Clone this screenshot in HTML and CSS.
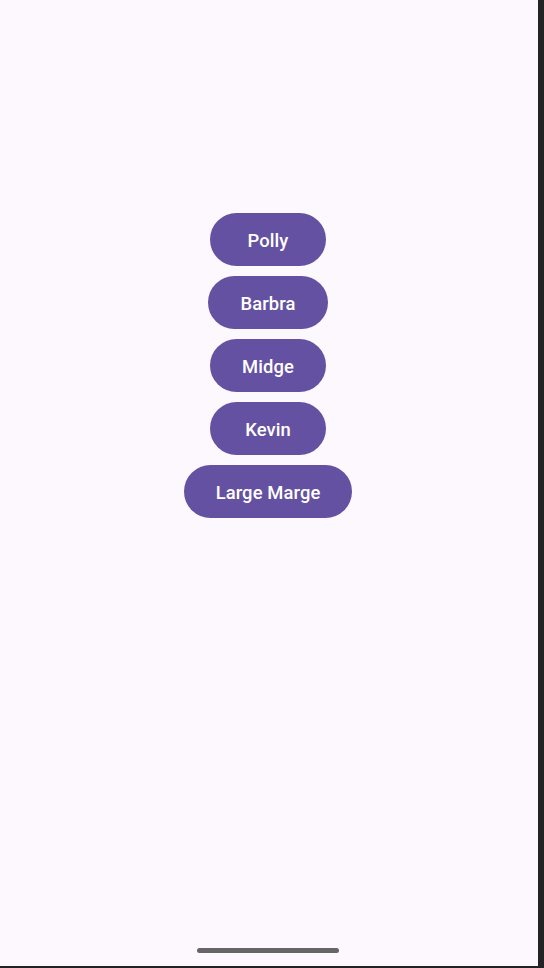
FILE: index.html
```html
<!DOCTYPE html>
<html lang="en">
<head>
<meta charset="utf-8">
<title>Buttons</title>
<link rel="stylesheet" href="styles.css">
</head>
<body>
<div class="screen">
  <div class="list">
    <button class="pill">Polly</button>
    <button class="pill">Barbra</button>
    <button class="pill">Midge</button>
    <button class="pill">Kevin</button>
    <button class="pill">Large Marge</button>
  </div>
  <div class="handle"></div>
</div>
</body>
</html>
```
FILE: styles.css
```css
html {
  background: #232323;
}
body {
  margin: 0;
  width: 544px;
  height: 968px;
  overflow: hidden;
}
.screen {
  width: 538px;
  height: 966px;
  background: #fdf8fd;
  display: flex;
  flex-direction: column;
  align-items: center;
}
.list {
  padding-top: 213px;
  padding-right: 2px;
  display: flex;
  flex-direction: column;
  align-items: center;
  gap: 10px;
}
.pill {
  box-sizing: border-box;
  height: 53px;
  min-width: 116px;
  padding: 3px 32px 0;
  border: none;
  border-radius: 27px;
  background: #6451a1;
  color: #ffffff;
  font-family: Roboto, "Noto Sans", sans-serif;
  font-weight: 500;
  font-size: 18.4px;
  letter-spacing: 0.1px;
  line-height: 1;
  cursor: pointer;
}
.handle {
  margin-top: auto;
  margin-bottom: 13px;
  margin-right: 2px;
  width: 142px;
  height: 5px;
  border-radius: 3px;
  background: #666666;
}
```
